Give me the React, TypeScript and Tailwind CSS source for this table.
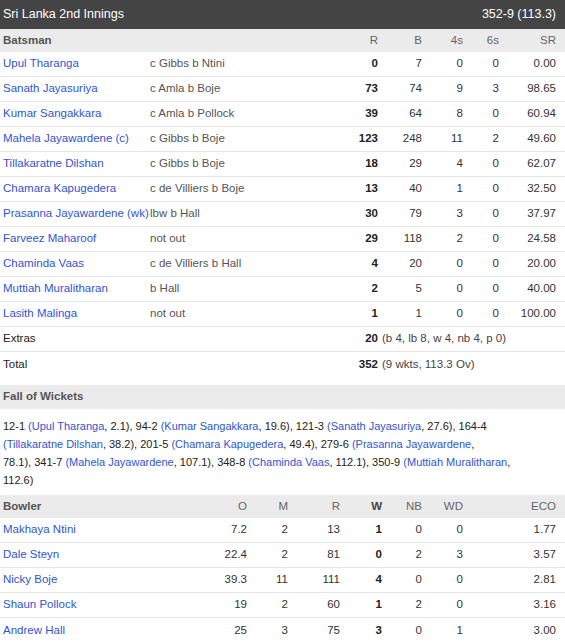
import React from 'react';

const batsmen = [
  { name: 'Upul Tharanga', out: 'c Gibbs b Ntini', r: 0, b: 7, f: 0, s: 0, sr: '0.00' },
  { name: 'Sanath Jayasuriya', out: 'c Amla b Boje', r: 73, b: 74, f: 9, s: 3, sr: '98.65' },
  { name: 'Kumar Sangakkara', out: 'c Amla b Pollock', r: 39, b: 64, f: 8, s: 0, sr: '60.94' },
  { name: 'Mahela Jayawardene (c)', out: 'c Gibbs b Boje', r: 123, b: 248, f: 11, s: 2, sr: '49.60' },
  { name: 'Tillakaratne Dilshan', out: 'c Gibbs b Boje', r: 18, b: 29, f: 4, s: 0, sr: '62.07' },
  { name: 'Chamara Kapugedera', out: 'c de Villiers b Boje', r: 13, b: 40, f: 1, s: 0, sr: '32.50' },
  { name: 'Prasanna Jayawardene (wk)', out: 'lbw b Hall', r: 30, b: 79, f: 3, s: 0, sr: '37.97' },
  { name: 'Farveez Maharoof', out: 'not out', r: 29, b: 118, f: 2, s: 0, sr: '24.58' },
  { name: 'Chaminda Vaas', out: 'c de Villiers b Hall', r: 4, b: 20, f: 0, s: 0, sr: '20.00' },
  { name: 'Muttiah Muralitharan', out: 'b Hall', r: 2, b: 5, f: 0, s: 0, sr: '40.00' },
  { name: 'Lasith Malinga', out: 'not out', r: 1, b: 1, f: 0, s: 0, sr: '100.00' },
];

const bowlers = [
  { name: 'Makhaya Ntini', o: '7.2', m: 2, r: 13, w: 1, nb: 0, wd: 0, eco: '1.77' },
  { name: 'Dale Steyn', o: '22.4', m: 2, r: 81, w: 0, nb: 2, wd: 3, eco: '3.57' },
  { name: 'Nicky Boje', o: '39.3', m: 11, r: 111, w: 4, nb: 0, wd: 0, eco: '2.81' },
  { name: 'Shaun Pollock', o: '19', m: 2, r: 60, w: 1, nb: 2, wd: 0, eco: '3.16' },
  { name: 'Andrew Hall', o: '25', m: 3, r: 75, w: 3, nb: 0, wd: 1, eco: '3.00' },
];

// score, batsman, over, break before over
const fow: [string, string, string, boolean][] = [
  ['12-1', 'Upul Tharanga', '2.1', false],
  ['94-2', 'Kumar Sangakkara', '19.6', false],
  ['121-3', 'Sanath Jayasuriya', '27.6', false],
  ['164-4', 'Tillakaratne Dilshan', '38.2', false],
  ['201-5', 'Chamara Kapugedera', '49.4', false],
  ['279-6', 'Prasanna Jayawardene', '78.1', true],
  ['341-7', 'Mahela Jayawardene', '107.1', false],
  ['348-8', 'Chaminda Vaas', '112.1', false],
  ['350-9', 'Muttiah Muralitharan', '112.6', false],
];

const batGrid = 'grid grid-cols-[150px_192px_45px_44px_41px_36px_57px]';
const bowlGrid = 'grid grid-cols-[206px_50px_41px_52px_42px_40px_41px_93px]';
const link = 'text-[#2f55d4]';
const num = 'text-right pr-[9px]';

export default function App() {
  return (
    <div className="w-[565px] bg-white text-[11.5px] text-[#333] font-['Liberation_Sans',Arial,sans-serif]">
      {/* innings title */}
      <div className="h-[29px] bg-[#444] text-white text-[12.5px] flex items-center justify-between pl-[3px] pr-[9px]">
        <span>Sri Lanka 2nd Innings</span>
        <span>352-9 (113.3)</span>
      </div>

      {/* batting */}
      <div className={`${batGrid} h-[23px] items-center bg-[#ebebeb] text-[#666]`}>
        <div className="pl-[3px] font-bold text-[#555]">Batsman</div>
        <div />
        <div className={num}>R</div>
        <div className={num}>B</div>
        <div className={num}>4s</div>
        <div className={num}>6s</div>
        <div className={num}>SR</div>
      </div>
      {batsmen.map((p) => (
        <div key={p.name} className={`${batGrid} h-[25px] items-center border-b border-[#e6e6e6]`}>
          <div className={`pl-[3px] whitespace-nowrap ${link}`}>{p.name}</div>
          <div className="text-[#555] whitespace-nowrap">{p.out}</div>
          <div className={`${num} font-bold text-[#222]`}>{p.r}</div>
          <div className={num}>{p.b}</div>
          <div className={num}>{p.f}</div>
          <div className={num}>{p.s}</div>
          <div className={num}>{p.sr}</div>
        </div>
      ))}
      <div className={`${batGrid} h-[25px] items-center border-b border-[#e6e6e6] text-[#222]`}>
        <div className="col-span-3 flex justify-between pl-[3px] pr-[9px]">
          <span>Extras</span>
          <span className="font-bold">20</span>
        </div>
        <div className="col-span-4 -ml-[5px] text-[#444]">(b 4, lb 8, w 4, nb 4, p 0)</div>
      </div>
      <div className={`${batGrid} h-[25px] items-center text-[#222]`}>
        <div className="col-span-3 flex justify-between pl-[3px] pr-[9px]">
          <span>Total</span>
          <span className="font-bold">352</span>
        </div>
        <div className="col-span-4 -ml-[5px] text-[#444]">(9 wkts, 113.3 Ov)</div>
      </div>

      {/* fall of wickets */}
      <div className="mt-[8px] h-[24px] bg-[#ebebeb] flex items-center pl-[3px] font-bold text-[#555]">
        Fall of Wickets
      </div>
      <p className="pl-[3px] pr-[30px] pt-[8px] pb-[6px] text-[11px] leading-[18px] text-[#222]">
        {fow.map(([score, name, over, brk], i) => (
          <React.Fragment key={score}>
            {score} <span className={link}>({name}</span>,{brk ? <br /> : ' '}
            {over}){i < fow.length - 1 ? ', ' : ''}
          </React.Fragment>
        ))}
      </p>

      {/* bowling */}
      <div className={`${bowlGrid} h-[23px] items-center bg-[#ebebeb] text-[#666]`}>
        <div className="pl-[3px] font-bold text-[#555]">Bowler</div>
        <div className={num}>O</div>
        <div className={num}>M</div>
        <div className={num}>R</div>
        <div className={`${num} font-bold text-[#444]`}>W</div>
        <div className={num}>NB</div>
        <div className={num}>WD</div>
        <div className={num}>ECO</div>
      </div>
      {bowlers.map((b, i) => (
        <div
          key={b.name}
          className={`${bowlGrid} h-[25px] items-center ${i < bowlers.length - 1 ? 'border-b border-[#e6e6e6]' : ''}`}
        >
          <div className={`pl-[3px] ${link}`}>{b.name}</div>
          <div className={num}>{b.o}</div>
          <div className={num}>{b.m}</div>
          <div className={num}>{b.r}</div>
          <div className={`${num} font-bold text-[#222]`}>{b.w}</div>
          <div className={num}>{b.nb}</div>
          <div className={num}>{b.wd}</div>
          <div className={num}>{b.eco}</div>
        </div>
      ))}
    </div>
  );
}
